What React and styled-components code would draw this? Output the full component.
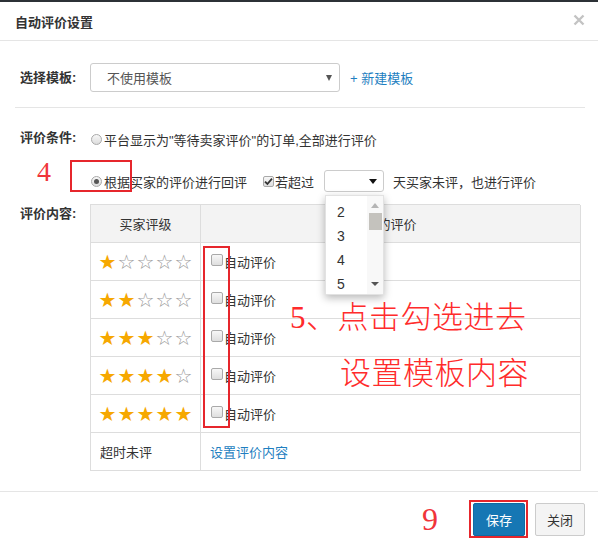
import React from "react";
import styled, { createGlobalStyle } from "styled-components";

const GlobalStyle = createGlobalStyle`
  html, body { margin: 0; padding: 0; background: #fff; }
  body {
    font-family: "Liberation Sans", "Noto Sans CJK SC", sans-serif;
    font-size: 13px;
    color: #333;
  }
  * { box-sizing: border-box; }
`;

const Dialog = styled.div`
  position: relative;
  width: 598px;
  height: 540px;
  overflow: hidden;
  background: #fff;
`;

const TopStrip = styled.div`
  height: 2px;
  background: #2c3136;
`;

const Header = styled.div`
  height: 39px;
  display: flex;
  align-items: center;
  justify-content: space-between;
  padding: 0 13px 0 15px;
  border-bottom: 1px solid #e5e5e5;
`;

const Title = styled.h4`
  margin: 0;
  font-size: 13px;
  font-weight: 700;
  color: #333;
`;

const CloseBtn = styled.button`
  border: 0;
  background: none;
  padding: 0;
  width: 12px;
  height: 12px;
  display: flex;
  margin-top: -3px;
  cursor: pointer;
`;

const Body = styled.div`
  padding: 22px 13px 0 15px;
`;

const Row = styled.div`
  display: flex;
  align-items: ${(p) => p.$align || "flex-start"};
  margin-top: ${(p) => p.$mt || 0}px;
  padding-left: 5px;
  min-height: ${(p) => p.$h || 0}px;
`;

const Label = styled.div`
  width: 70px;
  flex-shrink: 0;
  font-weight: 700;
  line-height: ${(p) => p.$lh || 20}px;
  color: #333;
`;

const SelectBox = styled.div`
  width: 250px;
  height: 29px;
  display: flex;
  align-items: center;
  justify-content: space-between;
  padding: 0 7px 0 16px;
  border: 1px solid #ccc;
  border-radius: 3px;
  color: #555;
  background: #fff;
`;

const Caret = styled.span`
  width: 0;
  height: 0;
  border-left: ${(p) => p.$w || 3.5}px solid transparent;
  border-right: ${(p) => p.$w || 3.5}px solid transparent;
  border-top: ${(p) => p.$h || 6}px solid ${(p) => p.$color || "#444"};
`;

const CaretUp = styled.span`
  width: 0;
  height: 0;
  border-left: 4px solid transparent;
  border-right: 4px solid transparent;
  border-bottom: 5px solid #b5b5b5;
`;

const Link = styled.a`
  color: #1f7fc1;
  text-decoration: none;
  margin-left: ${(p) => p.$ml || 0}px;
  cursor: pointer;
`;

const Divider = styled.div`
  margin-top: 15px;
  border-top: 1px solid #e5e5e5;
`;

const Options = styled.div`
  display: flex;
  flex-direction: column;
`;

const OptionLine = styled.div`
  display: flex;
  align-items: center;
  height: ${(p) => p.$h}px;
  margin-top: ${(p) => p.$mt || 0}px;
  white-space: nowrap;
`;

const Radio = styled.span`
  width: 11px;
  height: 11px;
  margin: 0 2px 0 1px;
  border-radius: 50%;
  border: 1px solid #a9a9a9;
  background: linear-gradient(#f8f8f8, #dcdcdc);
  display: flex;
  align-items: center;
  justify-content: center;
  &::after {
    content: "";
    display: ${(p) => (p.$checked ? "block" : "none")};
    width: 5px;
    height: 5px;
    border-radius: 50%;
    background: #555;
  }
`;

const CheckBox = styled.span`
  width: ${(p) => p.$size || 11}px;
  height: ${(p) => p.$size || 11}px;
  margin-left: ${(p) => p.$ml || 0}px;
  margin-right: ${(p) => p.$mr || 1}px;
  margin-top: ${(p) => p.$mt || 0}px;
  flex-shrink: 0;
  border: 1px solid #a9a9a9;
  border-radius: 2px;
  background: linear-gradient(#f7f7f7, #dedede);
  display: flex;
  align-items: center;
  justify-content: center;
`;

const SmallSelectWrap = styled.div`
  position: relative;
  margin-left: 10px;
`;

const SmallSelect = styled.div`
  width: 60px;
  height: 22px;
  border: 1px solid #ccc;
  border-radius: 3px;
  display: flex;
  align-items: center;
  justify-content: flex-end;
  padding-right: 6px;
  background: #fff;
`;

const TrailText = styled.span`
  margin-left: 9px;
`;

const DropList = styled.div`
  position: absolute;
  top: 25px;
  left: 1px;
  width: 59px;
  height: 100px;
  background: #fff;
  border: 1px solid #e2e2e2;
  box-shadow: 0 3px 8px rgba(0, 0, 0, 0.28);
  display: flex;
  z-index: 5;
`;

const DropItems = styled.div`
  flex: 1;
  padding-top: 4px;
`;

const DropItem = styled.div`
  height: 24px;
  line-height: 24px;
  padding-left: 11px;
  font-size: 14px;
  color: #333;
`;

const ScrollBar = styled.div`
  width: 16px;
  background: #f8f8f8;
  display: flex;
  flex-direction: column;
  align-items: center;
  padding: 7px 0 8px;
`;

const Thumb = styled.div`
  width: 13px;
  height: 17px;
  margin-top: 5px;
  background: #c4c2bd;
`;

const Spacer = styled.div`
  flex: 1;
`;

const Table = styled.div`
  display: grid;
  grid-template-columns: 110px 380px;
  border-top: 1px solid #ddd;
  border-left: 1px solid #ddd;
  width: 490px;
`;

const Cell = styled.div`
  height: ${(p) => p.$h || 38}px;
  border-right: 1px solid #ddd;
  border-bottom: 1px solid #ddd;
  display: flex;
  align-items: center;
  justify-content: ${(p) => (p.$center ? "center" : "flex-start")};
  padding-left: ${(p) => p.$pl || 0}px;
  background: ${(p) => (p.$head ? "#f3f3f3" : "#fff")};
  color: #333;
`;

const Star = styled.span`
  width: 19px;
  text-align: center;
  font-family: "DejaVu Sans", sans-serif;
  font-size: 20px;
  line-height: 1;
  color: ${(p) => (p.$on ? "#f6a800" : "#9a9a9a")};
`;

const Footer = styled.div`
  margin-top: 20px;
  border-top: 1px solid #e5e5e5;
  padding: 11px 13px 0;
  display: flex;
  justify-content: flex-end;
  gap: 10px;
`;

const Button = styled.button`
  width: ${(p) => p.$w}px;
  height: 33px;
  padding: 0;
  border-radius: 2px;
  font-family: "Liberation Sans", "Noto Sans CJK SC", sans-serif;
  font-size: 13px;
  cursor: pointer;
  border: 1px solid ${(p) => (p.$primary ? "#0f6aa3" : "#ccc")};
  background: ${(p) => (p.$primary ? "#1677b4" : "#f4f4f4")};
  color: ${(p) => (p.$primary ? "#fff" : "#333")};
`;

/* annotation overlays drawn on top of the screenshot */
const RedBox = styled.div`
  position: absolute;
  left: ${(p) => p.$x}px;
  top: ${(p) => p.$y}px;
  width: ${(p) => p.$w}px;
  height: ${(p) => p.$h}px;
  border: 2px solid #e6262c;
  pointer-events: none;
`;

const AnnoNum = styled.div`
  position: absolute;
  left: ${(p) => p.$x}px;
  top: ${(p) => p.$y}px;
  font-family: "Liberation Serif", serif;
  font-size: ${(p) => p.$size}px;
  line-height: 1;
  color: #f0343a;
`;

const AnnoText = styled.div`
  position: absolute;
  left: 290px;
  top: 290px;
  font-family: "Liberation Serif", "Noto Sans CJK SC", serif;
  font-size: 31px;
  font-weight: 300;
  line-height: 56px;
  letter-spacing: 0.5px;
  color: #ff2b2b;
  white-space: nowrap;
`;

const AnnoLine = styled.div`
  padding-left: ${(p) => p.$indent || 0}px;
`;

const CheckMark = () => (
  <svg width="9" height="9" viewBox="0 0 9 9">
    <path d="M1 4.6 L3.4 7 L8 1.6" fill="none" stroke="#333" strokeWidth="1.8" />
  </svg>
);

const Stars = ({ n }) => (
  <>
    {[0, 1, 2, 3, 4].map((i) => (
      <Star key={i} $on={i < n}>
        {i < n ? "★" : "☆"}
      </Star>
    ))}
  </>
);

export default function App() {
  return (
    <Dialog>
      <GlobalStyle />
      <TopStrip />
      <Header>
        <Title>自动评价设置</Title>
        <CloseBtn aria-label="关闭">
          <svg width="12" height="12" viewBox="0 0 12 12">
            <path d="M1.5 1.5 L10.5 10.5 M10.5 1.5 L1.5 10.5" stroke="#c3c3c3" strokeWidth="2.4" />
          </svg>
        </CloseBtn>
      </Header>

      <Body>
        <Row $align="center" $h={29}>
          <Label>选择模板:</Label>
          <SelectBox>
            <span>不使用模板</span>
            <Caret $color="#555" />
          </SelectBox>
          <Link $ml={10}>+ 新建模板</Link>
        </Row>

        <Divider />

        <Row $mt={23}>
          <Label $lh={14}>评价条件:</Label>
          <Options>
            <OptionLine $h={16}>
              <Radio />
              平台显示为"等待卖家评价"的订单,全部进行评价
            </OptionLine>
            <OptionLine $h={22} $mt={23}>
              <Radio $checked />
              根据买家的评价进行回评
              <CheckBox $ml={16} $mr={1}>
                <CheckMark />
              </CheckBox>
              若超过
              <SmallSelectWrap>
                <SmallSelect>
                  <Caret $color="#111" $w={4} $h={5} />
                </SmallSelect>
                <DropList>
                  <DropItems>
                    {["2", "3", "4", "5"].map((v) => (
                      <DropItem key={v}>{v}</DropItem>
                    ))}
                  </DropItems>
                  <ScrollBar>
                    <CaretUp />
                    <Thumb />
                    <Spacer />
                    <Caret $color="#555" $w={4} $h={4} />
                  </ScrollBar>
                </DropList>
              </SmallSelectWrap>
              <TrailText>天买家未评，也进行评价</TrailText>
            </OptionLine>
          </Options>
        </Row>

        <Row $mt={12}>
          <Label>评价内容:</Label>
          <Table>
            <Cell $head $center $h={38}>买家评级</Cell>
            <Cell $head $center $h={38}>我的评价</Cell>
            {[1, 2, 3, 4, 5].map((n) => (
              <React.Fragment key={n}>
                <Cell $pl={7}>
                  <Stars n={n} />
                </Cell>
                <Cell $pl={10}>
                  <CheckBox $size={12} $mr={1} $mt={-4} />
                  自动评价
                </Cell>
              </React.Fragment>
            ))}
            <Cell $pl={9}>超时未评</Cell>
            <Cell $pl={9}>
              <Link>设置评价内容</Link>
            </Cell>
          </Table>
        </Row>
      </Body>

      <Footer>
        <Button $primary $w={52}>保存</Button>
        <Button $w={50}>关闭</Button>
      </Footer>

      <AnnoNum $x={37} $y={158} $size={28}>4</AnnoNum>
      <RedBox $x={70} $y={160} $w={62} $h={32} />
      <RedBox $x={203} $y={246} $w={27} $h={182} />
      <AnnoText>
        <AnnoLine>5、点击勾选进去</AnnoLine>
        <AnnoLine $indent={50}>设置模板内容</AnnoLine>
      </AnnoText>
      <AnnoNum $x={422} $y={503} $size={32}>9</AnnoNum>
      <RedBox $x={469} $y={500} $w={59} $h={38} />
    </Dialog>
  );
}
